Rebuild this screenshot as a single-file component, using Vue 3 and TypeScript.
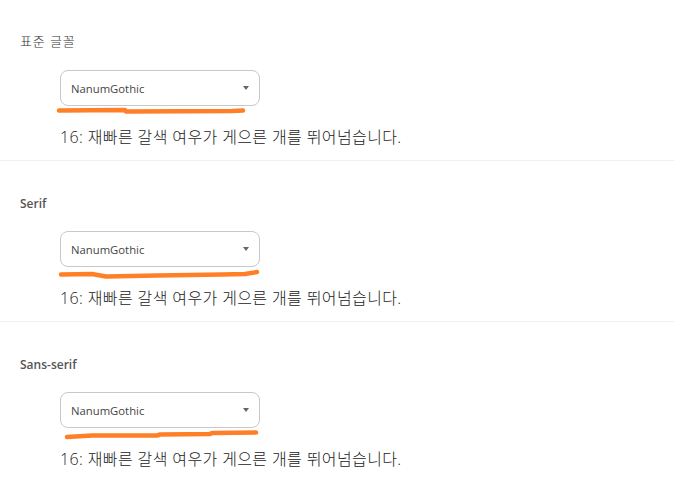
<script setup lang="ts">
interface FontRow { label: string; kind: string; stroke: string }
const rows: FontRow[] = [
  { label: '표준 글꼴', kind: 'ko', stroke: 'M59 110.5 L125 110 L126 111.5 L232 111 L243 110.5' },
  { label: 'Serif', kind: 'bold', stroke: 'M61 274.5 L92 274 L106 276.5 L157 275.5 L222 274.5 L245 274 L257 272' },
  { label: 'Sans-serif', kind: 'bold', stroke: 'M67 437 L92 435.5 L157 435.5 L160 434.5 L210 434 L212 433 L256 432.5' },
]
const offset = (i: number) => i * 161
</script>

<template>
  <main class="page">
    <section v-for="(row, i) in rows" :key="row.label" class="row">
      <h3 class="label" :class="row.kind">{{ row.label }}</h3>
      <div class="body">
        <div class="select">
          <span>NanumGothic</span>
          <i class="caret"></i>
        </div>
        <p class="sample">16: 재빠른 갈색 여우가 게으른 개를 뛰어넘습니다.</p>
      </div>
      <svg class="scribble" width="674" height="161" :viewBox="`0 ${offset(i)} 674 161`">
        <path :d="row.stroke" fill="none" stroke="#ff7f27" stroke-width="4.5" stroke-linecap="round" stroke-linejoin="round" />
      </svg>
    </section>
  </main>
</template>

<style>
html, body { margin: 0; background: #fff; }
</style>

<style scoped>
.page {
  width: 674px;
  height: 480px;
  overflow: hidden;
  font-family: "Open Sans", "Noto Sans CJK KR", sans-serif;
  color: #333;
}
.row {
  position: relative;
  box-sizing: border-box;
  height: 161px;
  padding: 34px 0 0 20px;
  border-bottom: 1px solid #efefef;
}
.row:last-child { border-bottom: none; }
.label {
  margin: 0;
  height: 16px;
  line-height: 16px;
  font-size: 12px;
  font-weight: 400;
  color: #555;
}
.label.ko {
  font-size: 13px;
  line-height: 14px;
  font-weight: 300;
  letter-spacing: 0.9px;
  color: #333;
}
.label.bold {
  font-weight: 600;
  line-height: 18px;
}
.body {
  margin: 20px 0 0 40px;
}
.select {
  box-sizing: border-box;
  width: 200px;
  height: 36px;
  border: 1px solid #c8c8c8;
  border-radius: 8px;
  display: flex;
  align-items: center;
  justify-content: space-between;
  padding: 0 10px;
  font-size: 11.3px;
  color: #444;
  background: #fff;
}
.caret {
  width: 0;
  height: 0;
  border-left: 3.5px solid transparent;
  border-right: 3.5px solid transparent;
  border-top: 4.5px solid #666;
  margin-top: -1px;
}
.sample {
  margin: 20px 0 0;
  height: 22px;
  line-height: 22px;
  font-size: 16px;
  font-weight: 300;
  letter-spacing: 0.38px;
  color: #222;
  white-space: nowrap;
}
.scribble {
  position: absolute;
  left: 0;
  top: 0;
  pointer-events: none;
}
</style>
